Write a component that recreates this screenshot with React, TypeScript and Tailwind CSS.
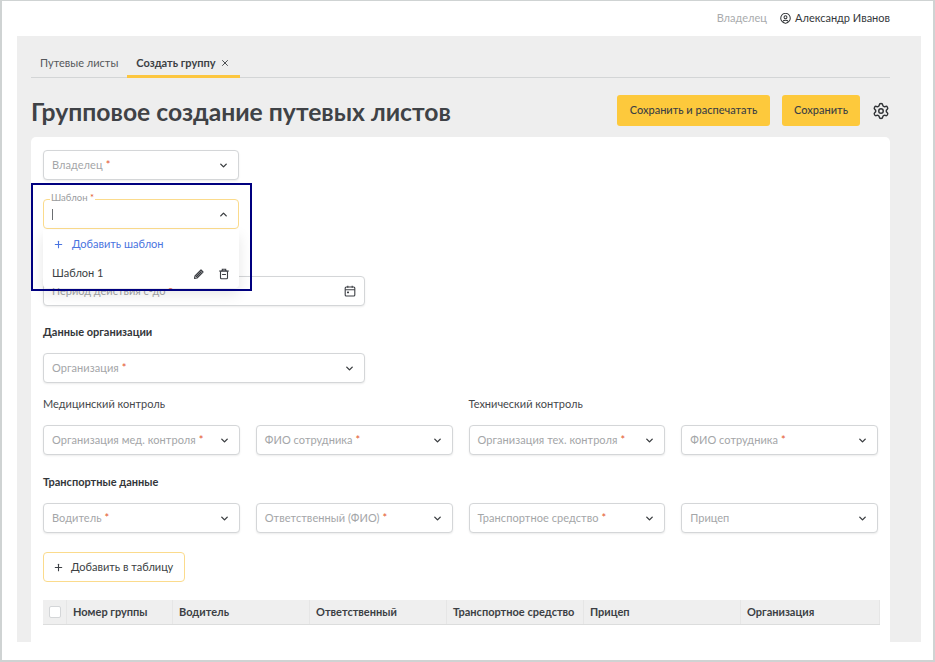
import { ChevronDown, ChevronUp, Plus, Settings, X } from 'lucide-react';

const font = "font-['Lato','Noto_Sans',sans-serif]";

function Field({ label, width = '' }: { label: string; width?: string }) {
    return (
        <div className={`flex h-[30px] items-center justify-between rounded-[4px] border border-[#d4d6d8] bg-white pl-2 pr-[9px] shadow-[0_1px_2px_rgba(0,0,0,0.08)] ${width}`}>
            <span className="whitespace-nowrap text-[11px] tracking-[0.06px] text-[#a4a6a8]">
                {label}
                <span className="ml-[3px] text-[#e4572e]">*</span>
            </span>
            <ChevronDown className="h-[11px] w-[11px] shrink-0 text-[#3a3d40]" strokeWidth={3} />
        </div>
    );
}

function PencilIcon() {
    return (
        <svg viewBox="0 0 12 12" className="h-[12px] w-[12px]" fill="none">
            <path d="M1.5 10.5 L2 8 L8 2 L10 4 L4 10 Z" fill="none" stroke="#3c3f44" strokeWidth="1.2" strokeLinejoin="round" />
            <path d="M2.5 8.5 L8 3 L9 4 L3.5 9.5 Z" fill="#3c3f44" />
        </svg>
    );
}

function TrashIcon() {
    return (
        <svg viewBox="0 0 12 12" className="h-[12px] w-[12px]" fill="none" stroke="#3c3f44" strokeWidth="1.1">
            <path d="M1.5 3 H10.5" strokeLinecap="round" />
            <path d="M4.3 3 V1.3 H7.7 V3" />
            <rect x="2.5" y="3" width="7" height="7.7" rx="1" />
            <path d="M4.5 6.5 H7.5" strokeLinecap="round" />
        </svg>
    );
}

function CalendarIcon() {
    return (
        <svg viewBox="0 0 12 12" className="h-[12px] w-[12px]" fill="none" stroke="#3c3f44" strokeWidth="1.1">
            <rect x="1.2" y="2" width="9.6" height="9" rx="1" />
            <path d="M1.2 4.8 H10.8 M3.8 0.8 V2.8 M8.2 0.8 V2.8" />
            <rect x="3" y="6.6" width="2" height="1.6" fill="#3c3f44" stroke="none" />
        </svg>
    );
}

function UserIcon() {
    return (
        <svg viewBox="0 0 12 12" className="h-[11px] w-[11px]" fill="none" stroke="#2f3235" strokeWidth="1.1">
            <path d="M6 11.3 C3.2 10.3 0.8 8.4 0.8 5.6 A5.2 5.2 0 0 1 11.2 5.6 C11.2 8.4 8.8 10.3 6 11.3 Z" />
            <circle cx="6" cy="4.6" r="1.6" />
            <path d="M3.4 9 C3.8 7.6 8.2 7.6 8.6 9" />
        </svg>
    );
}

const columns = [
    { title: 'Номер группы', width: 'w-[106px]' },
    { title: 'Водитель', width: 'w-[137px]' },
    { title: 'Ответственный', width: 'w-[137px]' },
    { title: 'Транспортное средство', width: 'w-[137px]' },
    { title: 'Прицеп', width: 'w-[157px]' },
    { title: 'Организация', width: 'flex-1' },
];

export default function App() {
    return (
        <div className={`relative h-[662px] w-[935px] overflow-hidden border-b-2 border-l-2 border-r-2 border-t border-[#cfd3d3] bg-white ${font} text-[#3c3f44]`}>
            {/* Top bar */}
            <div className="flex h-[35px] items-center justify-end pr-[43px] text-[11px]">
                <span className="mr-[13px] text-[#a9abad]">Владелец</span>
                <UserIcon />
                <span className="ml-[4px] text-[#35383b]">Александр Иванов</span>
            </div>

            <div className="ml-[15px] h-[606px] w-[904px] bg-[#eeeeee] pl-[14px] pr-[31px]">
                {/* Tabs */}
                <div className="flex h-[42px] items-end border-b border-[#d3d5d6]">
                    <div className="flex h-[29px] items-center px-[9px] pt-[2px] text-[11px] text-[#55585b]">Путевые листы</div>
                    <div className="flex h-[29px] w-[113px] translate-y-[1px] items-center gap-[4px] border-b-[3px] border-[#fcc63f] pl-[9px] pt-[2px] text-[11px] font-bold text-[#3c3f44]">
                        Создать группу
                        <X className="h-[10px] w-[10px]" strokeWidth={2.2} />
                    </div>
                </div>

                {/* Title row */}
                <div className="flex h-[59px] items-start justify-between">
                    <h1 className="pt-[21px] text-[24.7px] font-bold leading-[25px] text-[#3f4246]">Групповое создание путевых листов</h1>
                    <div className="flex items-center pt-[17px]">
                        <button className="h-[31px] w-[153px] rounded-[3px] bg-[#fdc93c] text-[11px] font-medium text-[#3c3f44]">Сохранить и распечатать</button>
                        <button className="ml-[12px] h-[31px] w-[78px] rounded-[3px] bg-[#fdc93c] text-[11px] font-medium text-[#3c3f44]">Сохранить</button>
                        <Settings className="ml-[12px] h-[18px] w-[18px] text-[#2f3235]" strokeWidth={1.9} />
                    </div>
                </div>

                {/* Card */}
                <div className="relative h-[530px] rounded-t-[5px] bg-white px-[12px] pt-[13px]">
                    <Field label="Владелец" width="w-[196px]" />

                    <div className="mt-[19px] flex h-[30px] w-[196px] items-center justify-between rounded-[4px] border border-[#fbdb8c] bg-white pl-2 pr-[9px]">
                        <span className="h-[11px] w-px bg-[#6b6e71]" />
                        <ChevronUp className="h-[11px] w-[11px] text-[#3a3d40]" strokeWidth={3} />
                    </div>

                    <div className="mt-[47px] flex h-[30px] w-[322px] items-center justify-between rounded-[4px] border border-[#d4d6d8] bg-white pl-2 pr-[8px] shadow-[0_1px_2px_rgba(0,0,0,0.08)]">
                        <span className="text-[11px] text-[#a4a6a8]">Период действия с-до <span className="text-[#e4572e]">*</span></span>
                        <CalendarIcon />
                    </div>

                    <div className="mt-[19px] text-[11px] font-bold leading-[14px] text-[#33363a]">Данные организации</div>
                    <div className="mt-[14px]">
                        <Field label="Организация" width="w-[322px]" />
                    </div>

                    <div className="mt-[14px] grid grid-cols-2 gap-x-[16px] text-[11px] leading-[14px] text-[#45484b]">
                        <span>Медицинский контроль</span>
                        <span>Технический контроль</span>
                    </div>
                    <div className="mt-[14px] grid grid-cols-4 gap-x-[16px]">
                        <Field label="Организация мед. контроля" />
                        <Field label="ФИО сотрудника" />
                        <Field label="Организация тех. контроля" />
                        <Field label="ФИО сотрудника" />
                    </div>

                    <div className="mt-[20px] text-[11px] font-bold leading-[14px] text-[#33363a]">Транспортные данные</div>
                    <div className="mt-[14px] grid grid-cols-4 gap-x-[16px]">
                        <Field label="Водитель" />
                        <Field label="Ответственный (ФИО)" />
                        <Field label="Транспортное средство" />
                        <div className="flex h-[30px] items-center justify-between rounded-[4px] border border-[#d4d6d8] bg-white pl-2 pr-[9px] shadow-[0_1px_2px_rgba(0,0,0,0.08)]">
                            <span className="text-[11px] text-[#a4a6a8]">Прицеп</span>
                            <ChevronDown className="h-[11px] w-[11px] text-[#3a3d40]" strokeWidth={3} />
                        </div>
                    </div>

                    <button className="mt-[19px] flex h-[30px] w-[142px] items-center rounded-[4px] border border-[#fbdb8c] bg-white pl-[9px] text-[11px] text-[#3c3f44]">
                        <Plus className="h-[11px] w-[11px]" strokeWidth={2.4} />
                        <span className="ml-[7px]">Добавить в таблицу</span>
                    </button>

                    {/* Table header */}
                    <div className="mt-[18px] flex h-[25px] w-[837px] items-stretch border-b border-[#dcdddd] bg-[#efefef] text-[11px] font-bold text-[#3c3f44]">
                        <div className="flex w-[24px] items-center justify-center border-r border-[#e6e6e6]">
                            <span className="h-[12px] w-[12px] rounded-[2px] border border-[#d4d6d8] bg-white" />
                        </div>
                        {columns.map(col => (
                            <div key={col.title} className={`flex items-center whitespace-nowrap border-r border-[#e6e6e6] pl-[6px] ${col.width}`}>
                                {col.title}
                            </div>
                        ))}
                    </div>

                    {/* Template field label */}
                    <span className="absolute left-[19px] top-[55px] bg-white px-[1px] text-[9.5px] leading-[11px] text-[#9a9c9e]">
                        Шаблон <span className="text-[#e4572e]">*</span>
                    </span>

                    {/* Open dropdown */}
                    <div className="absolute left-[12px] top-[93px] w-[196px] rounded-b-[4px] bg-white shadow-[0_6px_14px_rgba(0,0,0,0.10)]">
                        <div className="flex h-[29px] items-center pl-[10px] text-[11px] text-[#4a74e0]">
                            <Plus className="h-[11px] w-[11px]" strokeWidth={2.4} />
                            <span className="ml-[8px]">Добавить шаблон</span>
                        </div>
                        <div className="flex h-[29px] items-center justify-between px-[9px] text-[11px] text-[#3c3f44]">
                            <span>Шаблон 1</span>
                            <div className="flex items-center gap-[13px]">
                                <PencilIcon />
                                <TrashIcon />
                            </div>
                        </div>
                    </div>
                </div>
            </div>

            {/* Highlight annotation frame */}
            <div className="absolute left-[29px] top-[182px] h-[108px] w-[221px] border-[2px] border-[#00007f]" />
        </div>
    );
}
